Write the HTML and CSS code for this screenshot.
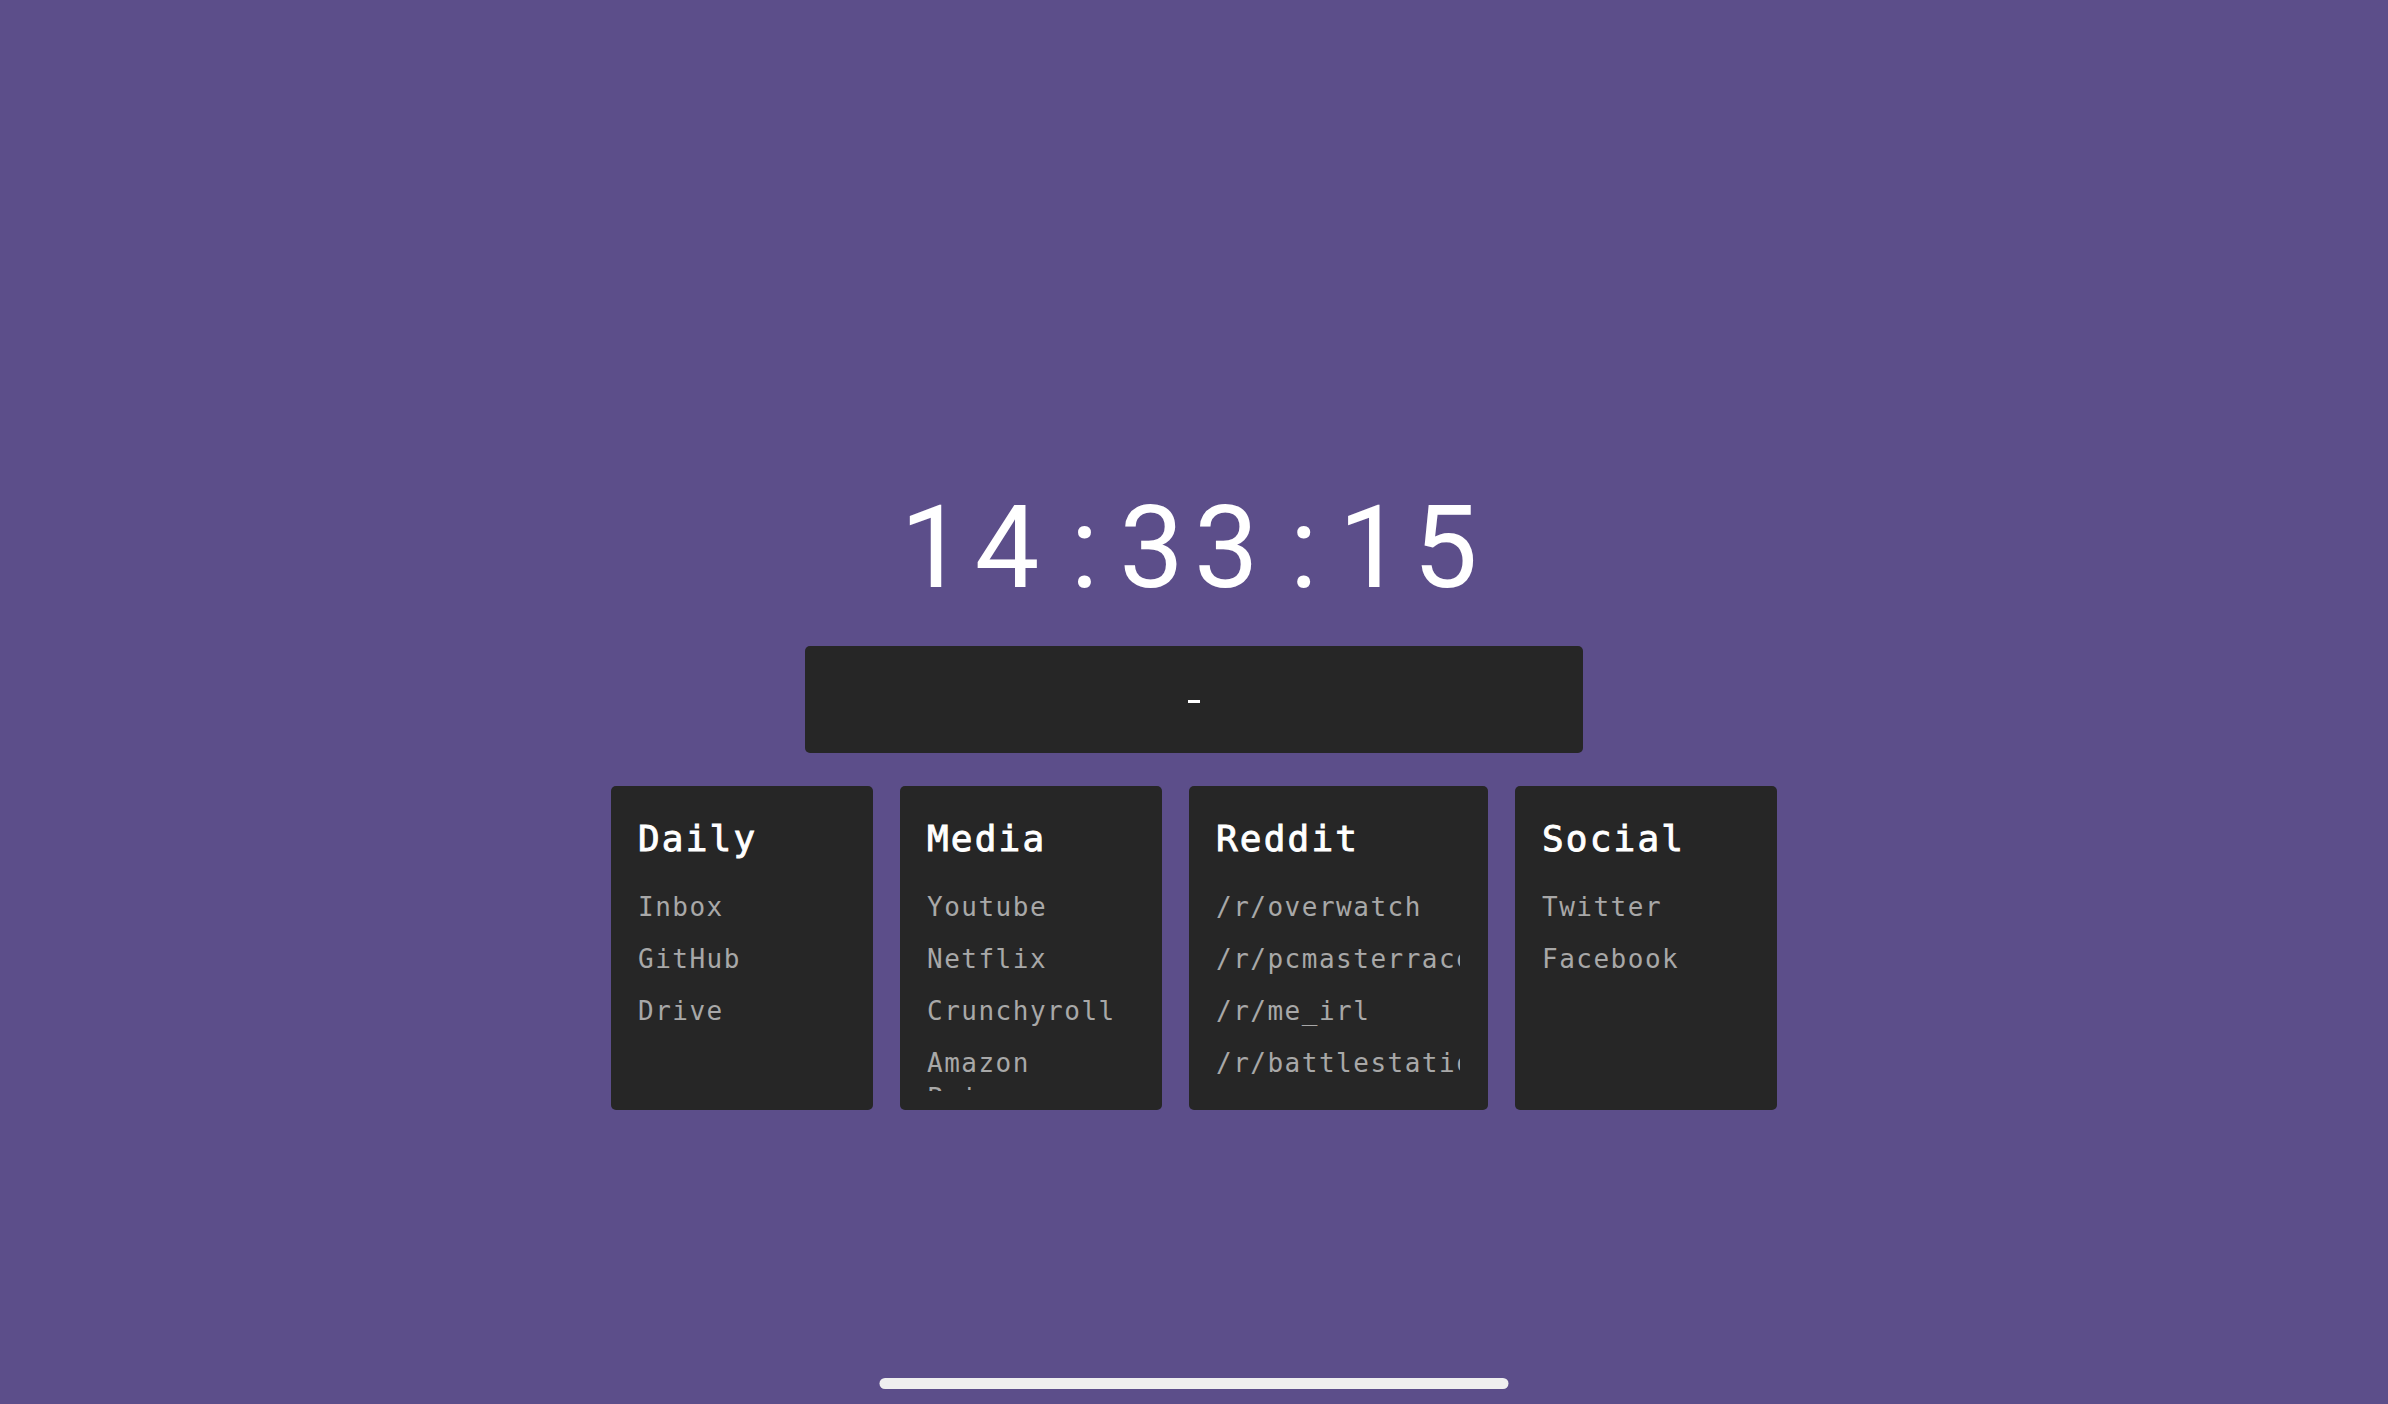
FILE: index.html
```html
<!DOCTYPE html>
<html lang="en">
<head>
<meta charset="utf-8">
<title>Start</title>
<link rel="stylesheet" href="styles.css">
</head>
<body>
<div class="page">
  <main class="start">
    <div class="clock"><span class="num">14</span><span class="sep">:</span><span class="num">33</span><span class="sep">:</span><span class="num">15</span></div>
    <div class="search"><span class="caret"></span></div>
    <div class="cards">
      <section class="card">
        <h2 class="card-title">Daily</h2>
        <ul class="links">
          <li><a href="#">Inbox</a></li>
          <li><a href="#">GitHub</a></li>
          <li><a href="#">Drive</a></li>
        </ul>
      </section>
      <section class="card">
        <h2 class="card-title">Media</h2>
        <ul class="links">
          <li><a href="#">Youtube</a></li>
          <li><a href="#">Netflix</a></li>
          <li><a href="#">Crunchyroll</a></li>
          <li><a href="#">Amazon Prime</a></li>
        </ul>
      </section>
      <section class="card card-wide">
        <h2 class="card-title">Reddit</h2>
        <ul class="links">
          <li><a href="#">/r/overwatch</a></li>
          <li><a href="#">/r/pcmasterrace</a></li>
          <li><a href="#">/r/me_irl</a></li>
          <li><a href="#">/r/battlestations</a></li>
        </ul>
      </section>
      <section class="card">
        <h2 class="card-title">Social</h2>
        <ul class="links">
          <li><a href="#">Twitter</a></li>
          <li><a href="#">Facebook</a></li>
        </ul>
      </section>
    </div>
  </main>
  <div class="home-indicator"></div>
</div>
</body>
</html>
```
FILE: styles.css
```css
html, body {
  margin: 0;
  height: 100%;
}

body {
  background: #5c4e8a;
  font-family: "DejaVu Sans Mono", "Liberation Mono", monospace;
  overflow: hidden;
}

.page {
  position: relative;
  height: 100vh;
}

.start {
  display: flex;
  flex-direction: column;
  align-items: center;
  padding-top: 490px;
}

.clock {
  display: flex;
  height: 115px;
  font-family: Roboto, "Liberation Sans", sans-serif;
  font-size: 115px;
  line-height: 115px;
  color: #ffffff;
}

.num {
  letter-spacing: 10px;
}

.sep {
  margin: 0 21px;
}

.search {
  margin-top: 41px;
  width: 778px;
  height: 107px;
  background: #262626;
  border-radius: 5px;
  display: flex;
  align-items: center;
  justify-content: center;
}

.caret {
  width: 12px;
  height: 3px;
  margin-top: 4px;
  background: #ffffff;
}

.cards {
  margin-top: 33px;
  display: flex;
  gap: 27px;
}

.card {
  width: 262px;
  height: 324px;
  box-sizing: border-box;
  padding: 33px 31px 19px 27px;
  background: #262626;
  border-radius: 5px;
  display: flex;
  flex-direction: column;
}

.card-wide {
  width: 299px;
  padding-right: 28px;
}

.card-title {
  margin: 0;
  font-size: 36px;
  line-height: 40px;
  font-weight: normal;
  -webkit-text-stroke: 0.9px #ffffff;
  letter-spacing: 2.2px;
  color: #ffffff;
}

.links {
  list-style: none;
  margin: 31px 0 0;
  padding: 0;
  flex: 1;
  min-height: 0;
  overflow: hidden;
}

.links li {
  font-size: 26px;
  line-height: 35px;
  letter-spacing: 1.5px;
  margin-bottom: 17px;
}

.links a {
  color: #a8a8a8;
  text-decoration: none;
}

.home-indicator {
  position: absolute;
  left: 50%;
  bottom: 15px;
  width: 629px;
  height: 11px;
  transform: translateX(-50%);
  border-radius: 6px;
  background: #efefef;
}
```
